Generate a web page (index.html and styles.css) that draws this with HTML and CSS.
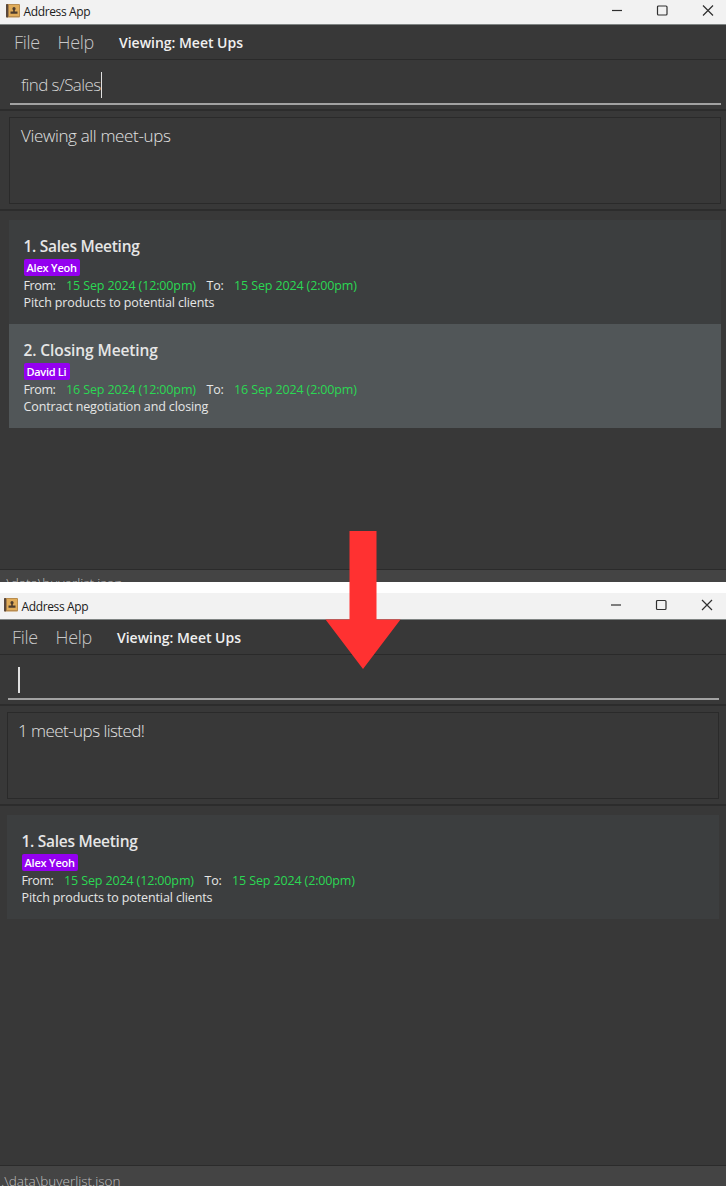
FILE: index.html
```html
<!DOCTYPE html>
<html lang="en">
<head>
<meta charset="utf-8">
<title>Address App</title>
<link rel="stylesheet" href="styles.css">
</head>
<body>
<main class="page">
  <section class="window window-before">
    <header class="titlebar">
      <svg class="app-icon" width="14" height="14" viewBox="0 0 14 14"><rect width="14" height="13.500" rx="1" fill="#b98c4d"/><rect x="3" y="1" width="10" height="11" fill="#e0ac59"/><rect width="2.200" height="13.500" rx="1" fill="#59483c"/><circle cx="8" cy="4.700" r="1.600" fill="#4d3c2d"/><path d="M7.200 5h1.600v2.600h2.700v2.200H4.500V7.600h2.700z" fill="#4d3c2d"/></svg>
      <span class="app-name">Address App</span>
      <svg class="controls" width="104" height="14" viewBox="0 0 104 14" fill="none" stroke="#303030" stroke-width="1.200"><path d="M1 6.500h10"/><rect x="46.500" y="2" width="9.500" height="9" rx="1"/><path d="M92 1.500l10 10M102 1.500l-10 10"/></svg>
    </header>
    <nav class="menubar"><span class="menu menu-file">File</span><span class="menu menu-help">Help</span><span class="viewing">Viewing: Meet Ups</span></nav>
    <div class="command"><div class="field"><span class="typed">find s/Sales</span><span class="caret"></span></div></div>
    <div class="result"><div class="result-box"><span class="all">Viewing all meet-ups</span></div></div>
    <div class="list">
      <article class="card">
        <h2 class="subject sales">1. Sales Meeting</h2>
        <span class="tag alex">Alex Yeoh</span>
        <p class="times"><span class="from">From:</span><span class="date start">15 Sep 2024 (12:00pm)</span><span class="to">To:</span><span class="date end">15 Sep 2024 (2:00pm)</span></p>
        <p class="note">Pitch products to potential clients</p>
      </article>
      <article class="card card-alt">
        <h2 class="subject closing">2. Closing Meeting</h2>
        <span class="tag david">David Li</span>
        <p class="times"><span class="from">From:</span><span class="date start">16 Sep 2024 (12:00pm)</span><span class="to">To:</span><span class="date end">16 Sep 2024 (2:00pm)</span></p>
        <p class="note contract">Contract negotiation and closing</p>
      </article>
    </div>
    <footer class="status"><span class="path">.\data\buyerlist.json</span></footer>
  </section>
  <section class="window window-after">
    <header class="titlebar">
      <svg class="app-icon" width="14" height="14" viewBox="0 0 14 14"><rect width="14" height="13.500" rx="1" fill="#b98c4d"/><rect x="3" y="1" width="10" height="11" fill="#e0ac59"/><rect width="2.200" height="13.500" rx="1" fill="#59483c"/><circle cx="8" cy="4.700" r="1.600" fill="#4d3c2d"/><path d="M7.200 5h1.600v2.600h2.700v2.200H4.500V7.600h2.700z" fill="#4d3c2d"/></svg>
      <span class="app-name">Address App</span>
      <svg class="controls" width="104" height="14" viewBox="0 0 104 14" fill="none" stroke="#303030" stroke-width="1.200"><path d="M1 7h10"/><rect x="46.500" y="2.500" width="9.500" height="9" rx="1"/><path d="M92 2l10 10M102 2l-10 10"/></svg>
    </header>
    <nav class="menubar"><span class="menu menu-file">File</span><span class="menu menu-help">Help</span><span class="viewing">Viewing: Meet Ups</span></nav>
    <div class="command"><div class="field"><span class="caret"></span></div></div>
    <div class="result"><div class="result-box"><span class="listed">1 meet-ups listed!</span></div></div>
    <div class="list">
      <article class="card">
        <h2 class="subject sales">1. Sales Meeting</h2>
        <span class="tag alex">Alex Yeoh</span>
        <p class="times"><span class="from">From:</span><span class="date start">15 Sep 2024 (12:00pm)</span><span class="to">To:</span><span class="date end">15 Sep 2024 (2:00pm)</span></p>
        <p class="note">Pitch products to potential clients</p>
      </article>
    </div>
    <footer class="status"><span class="path">.\data\buyerlist.json</span></footer>
  </section>
  <svg class="arrow" width="76" height="139" viewBox="0 0 76 139"><path d="M24.500 0h27v88.500H75.500L38 138 .5 88.500h24z" fill="#ff3131"/></svg>
</main>
</body>
</html>
```
FILE: styles.css
```css
* { box-sizing: border-box; }
body { margin: 0; background: #fff; font-family: "Open Sans", "Noto Sans", sans-serif; }
.page { position: relative; width: 726px; height: 1186px; overflow: hidden; display: flex; flex-direction: column; gap: 11px; }
.window { --shift: 0px; display: flex; flex-direction: column; background: #383838; overflow: hidden; white-space: nowrap; }
.window-before { height: 582px; }
.window-after { --shift: 2px; height: 593px; }
.titlebar { height: 25px; flex: none; display: flex; align-items: flex-start; padding: 4px 11px 0 calc(5.500px - var(--shift)); background: #f2f2f2; border-bottom: 1px solid #7f8483; }
.window-after .titlebar { height: 27px; padding-top: 5px; padding-right: 12px; }
.app-icon { flex: none; }
.app-name { margin-left: 4px; margin-top: -1px; font-size: 12px; line-height: 17px; color: #202020; letter-spacing: -0.360px; }
.window-after .app-name { margin-top: 0; }
.controls { margin-left: auto; }
.menubar { height: 35px; flex: none; display: flex; align-items: center; padding-left: calc(14px - var(--shift)); border-bottom: 1px solid #2a2a2a; color: #c8c8c8; }
.menu { font-size: 18px; font-weight: 300; line-height: 34px; letter-spacing: -0.300px; }
.menu-file { width: 43.500px; }
.menu-help { width: 61.500px; }
.viewing { font-size: 14px; font-weight: 600; color: #f0f0f0; letter-spacing: -0.020px; }
.command { height: 51px; flex: none; padding: 8px 5px 0 calc(10px - var(--shift)); border-bottom: 2px solid #2c2c2c; }
.window-after .command { padding-right: 7px; }
.field { height: 37px; display: flex; align-items: center; padding: 0 0 2px 11px; border-bottom: 2px solid #a2a2a2; font-size: 17px; font-weight: 300; color: #d6d6d6; }
.typed { letter-spacing: -0.580px; }
.caret { width: 1.500px; height: 26px; background: #e0e0e0; }
.window-after .caret { margin-left: -1px; }
.result { height: 100px; flex: none; padding: 6px 5px 0 calc(9px - var(--shift)); border-bottom: 2px solid #2c2c2c; }
.window-after .result { padding-right: 7px; }
.result-box { height: 87px; padding: 6px 11px; border: 1px solid #2a2a2a; font-size: 17px; font-weight: 300; line-height: 24px; color: #e2e2e2; }
.window-after .result-box { padding-left: 10px; }
.all { letter-spacing: -0.340px; }
.listed { letter-spacing: -0.550px; }
.list { flex: 1; padding: 9px 5px 0 calc(9px - var(--shift)); }
.window-after .list { padding-right: 7px; }
.card { height: 104px; padding: 15px 15px 0 14.500px; background: #3c3e3f; color: #e6e6e6; }
.card-alt { background: #515658; }
.subject { margin: 0; font-size: 15.500px; font-weight: 600; line-height: 23px; }
.sales { letter-spacing: -0.280px; }
.closing { letter-spacing: -0.100px; }
.tag { display: block; width: 56px; height: 17px; margin-top: 1px; padding-left: 3px; border-radius: 2px; background: #9400f0; color: #fff; font-size: 11px; font-weight: 600; line-height: 17px; letter-spacing: -0.200px; }
.david { width: 46px; letter-spacing: -0.300px; }
.times, .note { margin: 0; font-size: 12.500px; line-height: 17px; }
.times { display: flex; padding-top: 1px; }
.from { width: 42.500px; letter-spacing: -0.400px; }
.start { width: 140.500px; }
.to { width: 27.500px; letter-spacing: -0.200px; }
.date { color: #2bd853; letter-spacing: -0.130px; }
.note { letter-spacing: -0.120px; }
.status { height: 13px; flex: none; padding: 1px 0 0 calc(3px - var(--shift)); background: #444; border-top: 1px solid #2b2b2b; color: #c0c0c0; font-size: 13.500px; font-weight: 300; line-height: 24px; }
.window-after .status { height: 21px; padding-top: 3px; }
.arrow { position: absolute; left: 325px; top: 531px; }
```
